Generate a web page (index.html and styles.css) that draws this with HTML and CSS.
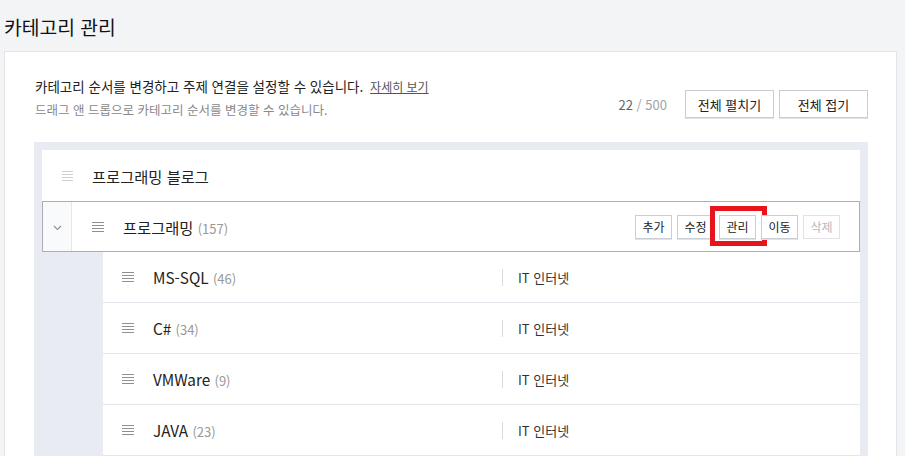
FILE: index.html
```html
<!DOCTYPE html>
<html lang="ko">
<head>
<meta charset="utf-8">
<title>카테고리 관리</title>
<link rel="stylesheet" href="styles.css">
</head>
<body>
<h1 class="page-title">카테고리 관리</h1>
<div class="panel">
  <div class="panel-head">
    <div class="intro">
      <p class="intro-main">카테고리 순서를 변경하고 주제 연결을 설정할 수 있습니다. <a class="more" href="#">자세히 보기</a></p>
      <p class="intro-sub">드래그 앤 드롭으로 카테고리 순서를 변경할 수 있습니다.</p>
    </div>
    <div class="head-actions">
      <span class="counter"><span class="cnt-now">22</span> <span class="cnt-max">/ 500</span></span>
      <button class="btn-wide">전체 펼치기</button>
      <button class="btn-wide">전체 접기</button>
    </div>
  </div>

  <div class="tree">
    <div class="row row-root">
      <svg class="drag light" width="11" height="10" viewBox="0 0 11 10"><path d="M0 0.5H11M0 3.5H11M0 6.5H11M0 9.5H11" stroke="currentColor" stroke-width="1"/></svg>
      <span class="name">프로그래밍 블로그</span>
    </div>

    <div class="row row-parent">
      <div class="toggle">
        <svg width="9" height="6" viewBox="0 0 9 6"><path d="M1 1L4.5 4.5L8 1" fill="none" stroke="#8a8f99" stroke-width="1.1"/></svg>
      </div>
      <svg class="drag" width="12" height="10" viewBox="0 0 12 10"><path d="M0 0.5H12M0 3.5H12M0 6.5H12M0 9.5H12" stroke="currentColor" stroke-width="1"/></svg>
      <span class="name">프로그래밍 <span class="count">(157)</span></span>
      <div class="row-actions">
        <button class="btn-sm">추가</button>
        <button class="btn-sm">수정</button>
        <button class="btn-sm marked">관리</button>
        <button class="btn-sm">이동</button>
        <button class="btn-sm disabled">삭제</button>
      </div>
    </div>

    <div class="row row-child">
      <div class="child-main">
        <svg class="drag" width="12" height="10" viewBox="0 0 12 10"><path d="M0 0.5H12M0 3.5H12M0 6.5H12M0 9.5H12" stroke="currentColor" stroke-width="1"/></svg>
        <span class="name">MS-SQL <span class="count">(46)</span></span>
      </div>
      <span class="topic">IT 인터넷</span>
    </div>
    <div class="row row-child">
      <div class="child-main">
        <svg class="drag" width="12" height="10" viewBox="0 0 12 10"><path d="M0 0.5H12M0 3.5H12M0 6.5H12M0 9.5H12" stroke="currentColor" stroke-width="1"/></svg>
        <span class="name">C# <span class="count">(34)</span></span>
      </div>
      <span class="topic">IT 인터넷</span>
    </div>
    <div class="row row-child">
      <div class="child-main">
        <svg class="drag" width="12" height="10" viewBox="0 0 12 10"><path d="M0 0.5H12M0 3.5H12M0 6.5H12M0 9.5H12" stroke="currentColor" stroke-width="1"/></svg>
        <span class="name">VMWare <span class="count">(9)</span></span>
      </div>
      <span class="topic">IT 인터넷</span>
    </div>
    <div class="row row-child">
      <div class="child-main">
        <svg class="drag" width="12" height="10" viewBox="0 0 12 10"><path d="M0 0.5H12M0 3.5H12M0 6.5H12M0 9.5H12" stroke="currentColor" stroke-width="1"/></svg>
        <span class="name">JAVA <span class="count">(23)</span></span>
      </div>
      <span class="topic">IT 인터넷</span>
    </div>
  </div>
</div>
</body>
</html>
```

FILE: styles.css
```css
* { box-sizing: border-box; }
html, body { margin: 0; padding: 0; }
body {
  background: #f3f4f6;
  font-family: "Noto Sans CJK KR", "Noto Sans", sans-serif;
  color: #222;
  width: 905px;
  height: 456px;
  overflow: hidden;
}
.page-title {
  margin: 0;
  padding: 13px 0 10px 4px;
  font-size: 19.3px;
  line-height: 28px;
  font-weight: 400;
  color: #111;
}
.panel {
  margin: 0 8px 0 4px;
  background: #fff;
  border: 1px solid #e2e4e8;
  border-bottom: none;
  padding: 24px 28px 0 29px;
  height: 420px;
}
.panel-head {
  display: flex;
  justify-content: space-between;
  align-items: flex-end;
}
.intro p { margin: 0; }
.intro-main {
  font-size: 13.5px;
  line-height: 20px;
  color: #222;
  padding-left: 1px;
}
.more {
  font-size: 12px;
  color: #555;
  text-decoration: underline;
  margin-left: 3px;
}
.intro-sub {
  font-size: 12.5px;
  line-height: 20px;
  color: #888;
  margin-top: 3px !important;
  padding-left: 1px;
}
.head-actions {
  display: flex;
  align-items: center;
  gap: 5px;
  margin-bottom: 2px;
}
.counter {
  font-size: 13px;
  margin-right: 13px;
  margin-top: 0;
}
.cnt-now { color: #666; }
.cnt-max { color: #a0a4aa; }
.btn-wide {
  width: 89px;
  height: 28px;
  background: #fff;
  border: 1px solid #c9ced6;
  box-shadow: 0 1px 0 #dfe2e7;
  font-family: inherit;
  font-size: 13px;
  color: #222;
  padding: 0;
}
.tree {
  margin-top: 22px;
  background: #e8ebf1;
  padding: 8px 8px 0 8px;
  height: 320px;
}
.row {
  display: flex;
  align-items: center;
  height: 51px;
  background: #fff;
}
.drag { color: #8f8f8f; flex: none; display: block; }
.drag.light { color: #cfcfcf; }
.name {
  font-size: 15.3px;
  color: #222;
  white-space: nowrap;
}
.count {
  font-size: 13px;
  color: #999;
}
.row-root { padding-left: 20px; }
.row-root .drag { margin-right: 19px; }
.row-parent {
  border: 1px solid #a9aeb8;
  padding-right: 19px;
}
.toggle {
  width: 29px;
  align-self: stretch;
  background: #f9fafb;
  border-right: 1px solid #e6e8ec;
  display: flex;
  align-items: center;
  justify-content: center;
  flex: none;
  padding-top: 2px;
}
.row-parent .drag { margin-left: 20px; margin-right: 19px; }
.row-actions {
  margin-left: auto;
  display: flex;
  gap: 5px;
}
.btn-sm {
  position: relative;
  width: 37px;
  height: 24px;
  background: #fff;
  border: 1px solid #c9ced6;
  box-shadow: 0 1px 0 #e0e3e8;
  font-family: inherit;
  font-size: 12px;
  color: #222;
  padding: 0;
}
.btn-sm.disabled {
  color: #b5b8bd;
  border-color: #e0e2e6;
  box-shadow: none;
}
.btn-sm.marked::after {
  content: "";
  position: absolute;
  left: -10px;
  top: -10px;
  right: -12px;
  bottom: -8px;
  border: 5px solid #e8141c;
}
.row-child {
  margin-left: 61px;
  border-bottom: 1px solid #e3e6ec;
}
.child-main {
  width: 400px;
  display: flex;
  align-items: center;
  padding-left: 19px;
  border-right: 1px solid #d7dbe2;
  height: 17px;
}
.child-main .drag { margin-right: 19px; }
.topic {
  font-size: 13px;
  color: #333;
  margin-left: 15px;
}
```
